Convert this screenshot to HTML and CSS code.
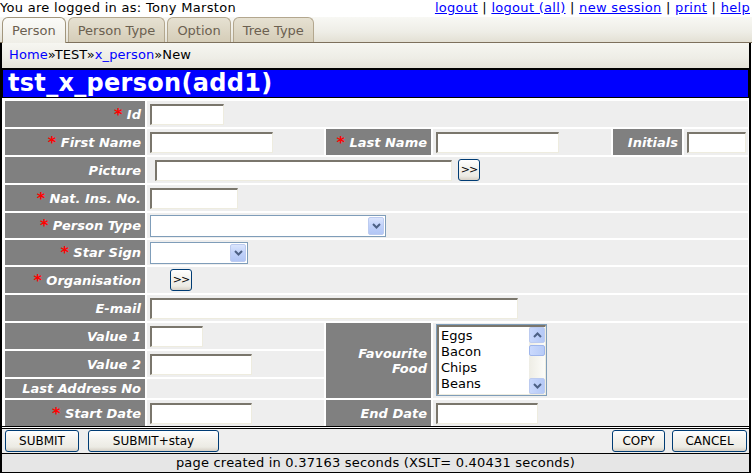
FILE: index.html
```html
<!DOCTYPE html>
<html>
<head>
<meta charset="utf-8">
<title>tst_x_person(add1)</title>
<link rel="stylesheet" href="styles.css">
</head>
<body>
<div class="topbar">
  <span class="user">You are logged in as: Tony Marston</span>
  <span class="links"><a href="#">logout</a> | <a href="#">logout (all)</a> | <a href="#">new session</a> | <a href="#">print</a> | <a href="#">help</a></span>
</div>
<div class="tabs">
  <span class="tab active">Person</span>
  <span class="tab">Person Type</span>
  <span class="tab">Option</span>
  <span class="tab">Tree Type</span>
</div>
<div class="frame">
  <div class="crumbs"><a href="#">Home</a>»TEST»<a href="#">x_person</a>»New</div>
  <h1 class="title">tst_x_person(add1)</h1>
  <div class="form-grid">
    <div class="lbl"><span class="req">*</span>&nbsp;Id</div>
    <div class="cell span5"><input class="txt w-id" type="text"></div>

    <div class="lbl"><span class="req">*</span>&nbsp;First Name</div>
    <div class="cell"><input class="txt w-name" type="text"></div>
    <div class="lbl"><span class="req">*</span>&nbsp;Last Name</div>
    <div class="cell"><input class="txt w-name" type="text"></div>
    <div class="lbl">Initials</div>
    <div class="cell"><input class="txt w-init" type="text"></div>

    <div class="lbl">Picture</div>
    <div class="cell span5"><input class="txt w-pic" type="text"><button class="xpbtn more more-pic" type="button">&gt;&gt;</button></div>

    <div class="lbl"><span class="req">*</span>&nbsp;Nat. Ins. No.</div>
    <div class="cell span5"><input class="txt w-ni" type="text"></div>

    <div class="lbl"><span class="req">*</span>&nbsp;Person Type</div>
    <div class="cell span5">
      <span class="select w-ptype"><select><option></option></select><span class="ddbtn"><svg width="9" height="6" viewBox="0 0 9 6"><path d="M1 1l3.5 3.5L8 1" fill="none" stroke="#4d6185" stroke-width="2"/></svg></span></span>
    </div>

    <div class="lbl"><span class="req">*</span>&nbsp;Star Sign</div>
    <div class="cell span5">
      <span class="select w-star"><select><option></option></select><span class="ddbtn"><svg width="9" height="6" viewBox="0 0 9 6"><path d="M1 1l3.5 3.5L8 1" fill="none" stroke="#4d6185" stroke-width="2"/></svg></span></span>
    </div>

    <div class="lbl"><span class="req">*</span>&nbsp;Organisation</div>
    <div class="cell span5"><button class="xpbtn more more-org" type="button">&gt;&gt;</button></div>

    <div class="lbl">E-mail</div>
    <div class="cell span5"><input class="txt w-email" type="text"></div>

    <div class="lbl">Value 1</div>
    <div class="cell"><input class="txt w-v1" type="text"></div>
    <div class="lbl rspan3">Favourite<br>Food</div>
    <div class="cell span3 rspan3 top">
      <div class="listbox">
        <div class="listbox-inner">
          <div class="items">
            <div>Eggs</div>
            <div>Bacon</div>
            <div>Chips</div>
            <div>Beans</div>
          </div>
          <div class="vscroll">
            <span class="sbtn"><svg width="9" height="6" viewBox="0 0 9 6"><path d="M1 5l3.5-3.5L8 5" fill="none" stroke="#4d6185" stroke-width="2"/></svg></span>
            <span class="thumb"></span>
            <span class="track"></span>
            <span class="sbtn"><svg width="9" height="6" viewBox="0 0 9 6"><path d="M1 1l3.5 3.5L8 1" fill="none" stroke="#4d6185" stroke-width="2"/></svg></span>
          </div>
        </div>
      </div>
    </div>

    <div class="lbl">Value 2</div>
    <div class="cell"><input class="txt w-v2" type="text"></div>

    <div class="lbl">Last Address No</div>
    <div class="cell"></div>

    <div class="lbl"><span class="req">*</span>&nbsp;Start Date</div>
    <div class="cell"><input class="txt w-date" type="text"></div>
    <div class="lbl">End Date</div>
    <div class="cell span3"><input class="txt w-date" type="text"></div>
  </div>
  <div class="actions">
    <div class="btn-group">
      <button class="xpbtn b-submit" type="button">SUBMIT</button>
      <button class="xpbtn b-stay" type="button">SUBMIT+stay</button>
    </div>
    <div class="btn-group right">
      <button class="xpbtn b-copy" type="button">COPY</button>
      <button class="xpbtn b-cancel" type="button">CANCEL</button>
    </div>
  </div>
  <div class="footer">page created in 0.37163 seconds (XSLT= 0.40431 seconds)</div>
</div>
</body>
</html>
```

FILE: styles.css
```css
* { box-sizing: border-box; }
html, body { margin: 0; padding: 0; }
body {
  width: 752px;
  height: 473px;
  overflow: hidden;
  background: #fff;
  color: #000;
  font-family: "DejaVu Sans", Verdana, sans-serif;
  font-size: 13px;
}
a { color: #0000ff; text-decoration: underline; }

/* top line */
.topbar {
  display: flex;
  justify-content: space-between;
  height: 17px;
  line-height: 15px;
  padding-right: 2px;
  white-space: nowrap;
  letter-spacing: 0.3px;
}

/* tabs */
.tabs {
  display: flex;
  align-items: flex-end;
  gap: 2px;
  height: 26px;
  padding-left: 2px;
  background: linear-gradient(#f8f8f4, #eeede6 60%, #e3e0d4);
  border-bottom: 1px solid #7d705c;
}
.tab {
  display: flex;
  align-items: center;
  height: 25px;
  padding: 0 9px;
  color: #6b6050;
  background: linear-gradient(#e6e1d2, #d5cdb8);
  border: 1px solid #b3a78e;
  border-bottom: none;
  border-radius: 6px 6px 0 0;
  white-space: nowrap;
}
.tab.active {
  height: 26px;
  margin-bottom: -1px;
  background: linear-gradient(#fbfbf8, #efeee7);
  border-color: #a2967d;
}

/* frame */
.frame {
  width: 751px;
  border-left: 2px solid #000;
  border-right: 2px solid #000;
}
.crumbs {
  height: 26px;
  line-height: 24px;
  padding-left: 7px;
  background: linear-gradient(#f6f6f1, #eeede6 60%, #e4e2d8);
  border-bottom: 1px solid #000;
  white-space: nowrap;
  letter-spacing: 0.1px;
}
.crumbs a { text-decoration: none; }
.title {
  margin: 0;
  height: 29px;
  padding-left: 5px;
  background: #0000ff;
  border: 1px solid #000;
  color: #fff;
  font-size: 24px;
  font-weight: bold;
  line-height: 26px;
  letter-spacing: 0.3px;
  white-space: nowrap;
}

/* form grid */
.form-grid {
  display: grid;
  grid-template-columns: 140px 177px 105px 178px 69px 1fr;
  grid-template-rows: 26px 26px 26px 26px 25px 25px 26px 26px 26px 26px 19px 26px;
  gap: 2px;
  padding: 3px 1px 0 3px;
  border-bottom: 1px solid #000;
}
.lbl {
  display: flex;
  align-items: center;
  justify-content: flex-end;
  padding-right: 4px;
  background: #808080;
  color: #fff;
  font-style: italic;
  font-weight: bold;
  text-align: right;
  white-space: nowrap;
  line-height: 15px;
}
.req {
  color: #ff0000;
  font-style: normal;
  font-size: 16px;
  vertical-align: -3px;
}
.cell {
  display: flex;
  align-items: center;
  padding: 0 3px;
  background: #eeeeee;
  min-width: 0;
}
.cell.top { align-items: flex-start; padding-top: 1px; }
.span5 { grid-column: span 5; }
.span3 { grid-column: span 3; }
.rspan3 { grid-row: span 3; }
.lbl.rspan3 { white-space: normal; }

/* inputs */
.txt {
  height: 21px;
  margin: 0;
  padding: 0 2px;
  border-style: solid;
  border-width: 2px 1px 1px 2px;
  border-color: #7a766c #eeecdf #eeecdf #7a766c;
  background: #fff;
  font: inherit;
}
.w-id { width: 74px; }
.w-name { width: 123px; }
.w-init { width: 59px; }
.w-pic { width: 297px; margin-left: 5px; }
.w-ni { width: 88px; }
.w-email { width: 368px; }
.w-v1 { width: 53px; }
.w-v2 { width: 102px; }
.w-date { width: 102px; }

/* xp buttons */
.xpbtn {
  height: 22px;
  margin: 0;
  padding: 0;
  border: 1px solid #003c74;
  border-radius: 3px;
  background: linear-gradient(#ffffff, #f4f3ee 40%, #ecebe4 80%, #d6d0c5);
  color: #000;
  font-family: "DejaVu Sans", Tahoma, sans-serif;
  font-size: 12px;
  line-height: 18px;
}
.more {
  width: 22px;
  font-size: 11px;
  letter-spacing: -1px;
}
.more-pic { margin-left: 6px; }
.more-org { margin-left: 20px; }

/* fake xp select */
.select {
  display: inline-flex;
  align-items: center;
  height: 22px;
  border: 1px solid #7f9db9;
  background: #fff;
}
.select select {
  flex: 1;
  min-width: 0;
  height: 100%;
  border: none;
  background: transparent;
  appearance: none;
  -webkit-appearance: none;
  font: inherit;
}
.ddbtn {
  display: flex;
  align-items: center;
  justify-content: center;
  width: 16px;
  height: 18px;
  margin-right: 1px;
  border: 1px solid #bccbf0;
  border-radius: 2px;
  background: linear-gradient(#dbe5fd, #c0d1fa 50%, #b2c6f5);
}
.w-ptype { width: 236px; }
.w-star { width: 98px; }

/* list box */
.listbox {
  width: 111px;
  height: 72px;
  border: 1px solid #7f9db9;
  background: #fff;
}
.listbox-inner {
  display: flex;
  height: 100%;
  border-style: solid;
  border-width: 2px 1px 1px 2px;
  border-color: #7a766c #eeecdf #eeecdf #7a766c;
}
.items {
  flex: 1;
  padding: 1px 0 0 2px;
  line-height: 16px;
  overflow: hidden;
}
.vscroll {
  display: flex;
  flex-direction: column;
  width: 16px;
  background: linear-gradient(90deg, #eeede5, #fcfcf9);
}
.sbtn {
  display: flex;
  align-items: center;
  justify-content: center;
  height: 16px;
  border: 1px solid #bccbf0;
  border-radius: 2px;
  background: linear-gradient(90deg, #c9d8fc, #b4c8f6);
}
.thumb {
  height: 11px;
  margin-top: 2px;
  border: 1px solid #9fb6ec;
  border-radius: 2px;
  background: linear-gradient(90deg, #cad9fd, #b7cbf7);
}
.track { flex: 1; }

/* actions + footer */
.actions {
  display: flex;
  justify-content: space-between;
  align-items: center;
  height: 25px;
  margin-top: 1px;
  padding: 0 2px 0 3px;
  background: #eeeeee;
  border-top: 1px solid #000;
}
.btn-group { display: flex; gap: 9px; }
.btn-group.right { gap: 7px; }
.b-submit { width: 74px; }
.b-stay { width: 131px; }
.b-copy { width: 53px; }
.b-cancel { width: 75px; }
.footer {
  height: 20px;
  line-height: 18px;
  text-align: center;
  background: #e6e6e6;
  border-top: 1px solid #000;
  border-bottom: 1px solid #000;
  font-size: 13px;
  letter-spacing: 0.2px;
  white-space: nowrap;
}
```
